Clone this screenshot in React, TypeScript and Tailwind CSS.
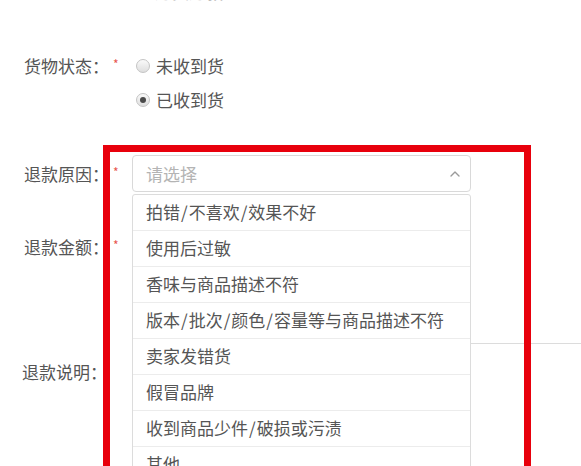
import { ChevronUp } from 'lucide-react';

// Refund form, with the "退款原因" select opened and its option list
// marked by a red annotation frame.

const REASONS = [
  '拍错/不喜欢/效果不好',
  '使用后过敏',
  '香味与商品描述不符',
  '版本/批次/颜色/容量等与商品描述不符',
  '卖家发错货',
  '假冒品牌',
  '收到商品少件/破损或污渍',
  '其他',
];

function Slashed({ text }: { text: string }) {
  const parts = text.split('/');
  return (
    <>
      {parts.map((p, i) => (
        <span key={i}>
          {i > 0 && <span className="mx-[1px]">/</span>}
          {p}
        </span>
      ))}
    </>
  );
}

function Label({ text, required }: { text: string; required?: boolean }) {
  return (
    <div className="flex h-[37px] flex-none items-center">
      <span className="w-[87px] whitespace-nowrap">{text}</span>
      <span className="w-[21px] -translate-y-[2px] pl-[2px] text-[12px] text-[#e8554e]">
        {required ? '*' : ''}
      </span>
    </div>
  );
}

function Radio({ label, checked }: { label: string; checked?: boolean }) {
  return (
    <div className="flex h-[34px] items-center gap-[6px] pl-[4px]">
      <span className="flex h-[14px] w-[14px] items-center justify-center rounded-full border border-[#c4c4c4] bg-gradient-to-b from-[#fafafa] to-[#dedede]">
        {checked && <span className="h-[6px] w-[6px] rounded-full bg-[#4a4a4a]" />}
      </span>
      <span>{label}</span>
    </div>
  );
}

export default function App() {
  return (
    <div className="relative h-[466px] w-full overflow-hidden bg-white pl-6 font-['Noto_Sans_CJK_SC',sans-serif] text-[17px] text-[#555]">
      {/* tail of the row above, cut by the top edge */}
      <div className="h-[3px] overflow-hidden">
        <div className="-mt-[21px] pl-[131px] text-[#bbb]">退货退款</div>
      </div>

      {/* 货物状态 */}
      <div className="mt-[46px] flex items-start">
        <div className="-mt-[1.5px]">
          <Label text="货物状态：" required />
        </div>
        <div className="flex flex-col">
          <Radio label="未收到货" />
          <Radio label="已收到货" checked />
        </div>
      </div>

      {/* 退款原因 */}
      <div className="mt-[38px] flex items-center">
        <Label text="退款原因：" required />
        <div className="relative z-10">
          <div className="flex h-[37px] w-[339px] items-center justify-between rounded-[4px] border border-[#d9d9d9] pl-[13px] pr-[7px] text-[#b4b4b4]">
            <span>请选择</span>
            <ChevronUp size={16} strokeWidth={2} className="text-[#9a9a9a]" />
          </div>
          <ul className="absolute left-0 top-full mt-[2px] w-[339px] rounded-[3px] border border-[#dcdcdc] bg-white">
            {REASONS.map((r) => (
              <li
                key={r}
                className="flex h-[36px] items-center whitespace-nowrap border-b border-[#ececec] pb-[2px] pl-[13px]"
              >
                <Slashed text={r} />
              </li>
            ))}
          </ul>
        </div>
      </div>

      {/* 退款金额 */}
      <div className="mt-[36px] flex items-center">
        <Label text="退款金额：" required />
        <div className="h-[37px] w-[200px] rounded-[4px] border border-[#d9d9d9]" />
      </div>

      {/* 退款说明 */}
      <div className="mt-[78px] flex items-start">
        <div className="mt-[10px] -ml-[2px]">
          <Label text="退款说明：" />
        </div>
        <div className="ml-[2px] h-[150px] w-[540px] flex-none border border-[#dcdcdc]" />
      </div>

      {/* red annotation frame */}
      <div className="absolute left-[103px] top-[145px] z-20 h-[400px] w-[428px] border-[7px] border-[#e8000c]" />
    </div>
  );
}
